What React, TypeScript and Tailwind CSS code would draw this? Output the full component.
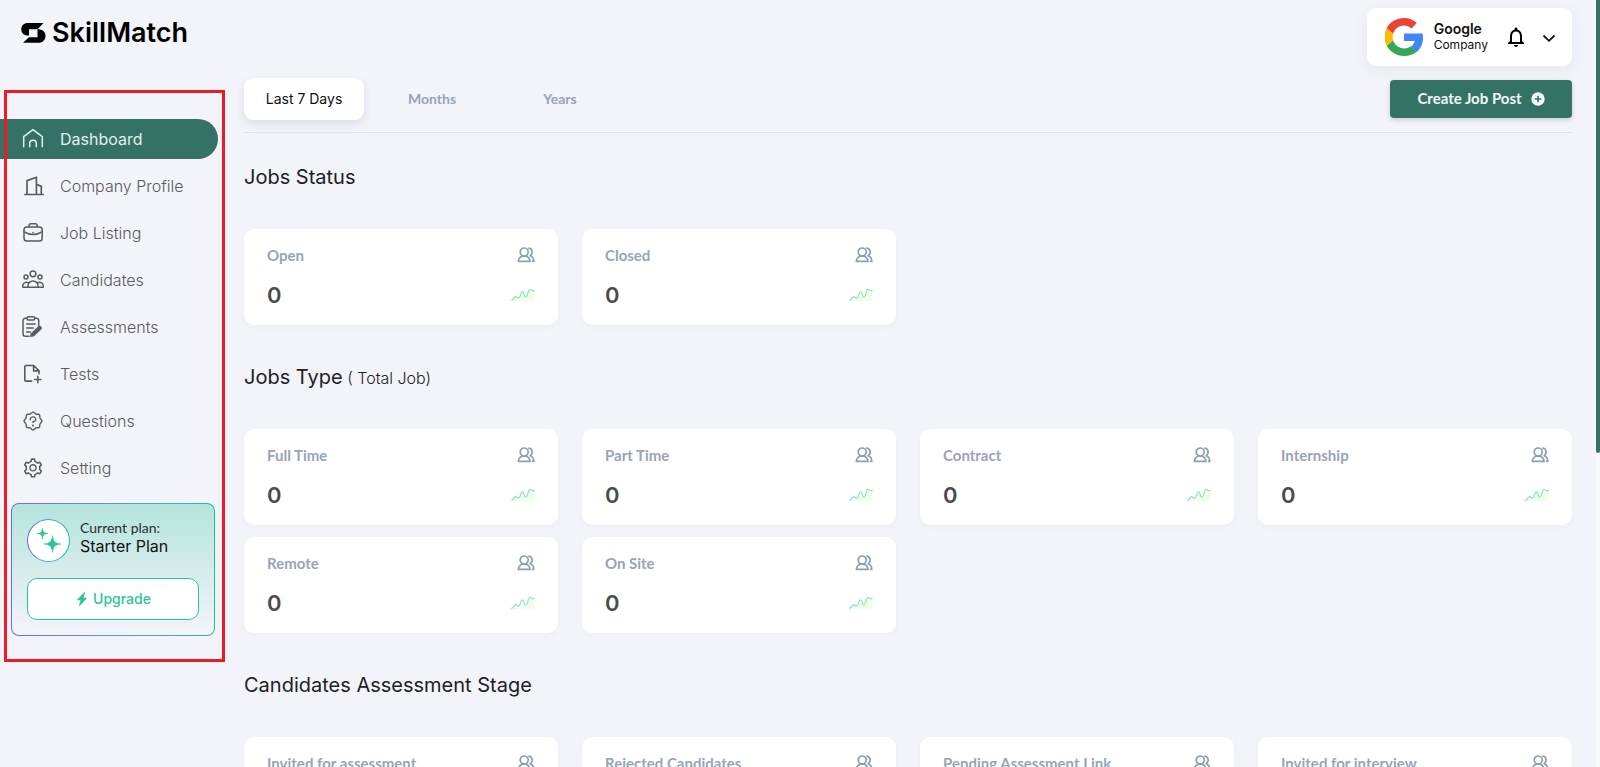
import type { ReactNode } from "react";
import { AiOutlineSetting } from "react-icons/ai";
import { BsFillLightningChargeFill } from "react-icons/bs";
import { MdNotificationsNone } from "react-icons/md";
import { PiSealQuestion } from "react-icons/pi";

type LineIconProps = { size?: number; strokeWidth?: number; children: ReactNode };

function LineIcon({ size = 22, strokeWidth = 1.4, children }: LineIconProps) {
  return (
    <svg
      width={size}
      height={size}
      viewBox="0 0 22 22"
      fill="none"
      stroke="currentColor"
      strokeWidth={strokeWidth}
      strokeLinecap="round"
      strokeLinejoin="round"
      aria-hidden="true"
      className="shrink-0"
    >
      {children}
    </svg>
  );
}

const HomeIcon = () => (
  <LineIcon strokeWidth={1.5}>
    <path d="M1.7 18.800V8.600L11 1.700l9.300 6.900v10.200" />
    <path d="M7.700 18.800v-3.200a3.300 3.300 0 0 1 6.600 0v3.200" />
  </LineIcon>
);

const CompanyIcon = () => (
  <LineIcon strokeWidth={1.7}>
    <path d="M3 19.500h18.200M5 19.500V5.600l9.400-3.400v17.300M14.400 9.200l4.900 2.200v8.100" />
  </LineIcon>
);

const BriefcaseIcon = () => (
  <LineIcon strokeWidth={1.5}>
    <rect x="2" y="5" width="18.200" height="14" rx="2.800" />
    <path d="M7 4.800V3.800c0-1.200.8-2 2-2h4.200c1.200 0 2 .8 2 2v1M2.200 9.900c5.200 3.500 12.600 3.500 17.800 0M11 10.600v.2" />
  </LineIcon>
);

const CandidatesIcon = () => (
  <LineIcon strokeWidth={1.5}>
    <circle cx="11" cy="4.800" r="2.900" />
    <circle cx="4" cy="8" r="2" />
    <circle cx="18" cy="8" r="2" />
    <path d="M6 18.300v-1.400a5 5 0 0 1 10 0v1.400zM6.300 13.700C3.300 12.600.8 14.300.8 16.500v1.800H6M15.700 13.700c3-1.100 5.500.6 5.500 2.800v1.800H16" />
  </LineIcon>
);

const AssessmentIcon = () => (
  <LineIcon strokeWidth={1.5}>
    <path d="M4.800 2.300H3.200A2.200 2.200 0 0 0 1 4.500v13.600a2.200 2.200 0 0 0 2.200 2.200H7M12.900 2.300h1.600a2.200 2.200 0 0 1 2.200 2.200v5" />
    <rect x="5" y=".8" width="7.800" height="3.100" rx="1.500" />
    <path d="M4.700 8h8.400M4.700 12h6.600M4.700 15.900h3.600" />
    <path
      d="m9 17.500 7.300-7c1.800-1.300 4.200.7 2.800 2.700L12 20l-3.300.6z"
      fill="currentColor"
      strokeWidth=".7"
    />
  </LineIcon>
);

const FileAddIcon = () => (
  <LineIcon strokeWidth={1.6}>
    <path d="M9.800 18.100H4a1.200 1.200 0 0 1-1.200-1.200V3.700A1.200 1.200 0 0 1 4 2.500h7.700l5.300 5.300v3M11.600 2.700v5.200h5.200M15.800 13.300v6.400M12.600 16.500H19" />
  </LineIcon>
);

const UsersIcon = () => (
  <svg
    width="18"
    height="18"
    viewBox="0 0 18 18"
    fill="none"
    stroke="#8a9fb0"
    strokeWidth="1.700"
    strokeLinejoin="round"
    strokeLinecap="round"
    aria-hidden="true"
  >
    <circle cx="7.200" cy="6" r="4" />
    <path d="M1.400 15.400c0-3 1.800-4.300 3.700-5.200h4.200c1.900.9 3.700 2.200 3.700 5.200zM12 2.200c3.600.6 4.200 5.400 1.200 7.500 2 .8 3.600 2.300 3.600 5.700h-1.200" />
  </svg>
);

const TrendIcon = () => (
  <svg width="24" height="14" viewBox="0 0 24 14" fill="none" aria-hidden="true">
    <path
      d="M.7 12.500 3.800 9c1-.9 1.700-.2 2.400.5.9.8 1.900.4 2.500-.8l1.700-4c.6-1.400 1.800-1.100 2.300.2l1 3.300c.5 1.300 1.700 1.200 2.200-.1l2-5.700c.5-1.300 1.500-1.500 2.200-.6.8.9 1.800 1.200 3.200.6V13H.7z"
      fill="#effee6"
    />
    <path
      d="M.7 12.500 3.800 9c1-.9 1.700-.2 2.400.5.9.8 1.900.4 2.500-.8l1.700-4c.6-1.400 1.800-1.100 2.300.2l1 3.300c.5 1.300 1.700 1.200 2.200-.1l2-5.700c.5-1.300 1.500-1.500 2.200-.6.8.9 1.800 1.200 3.200.6"
      stroke="#93e2c6"
      strokeWidth="1.200"
      strokeLinecap="round"
    />
  </svg>
);

const GoogleLogo = () => (
  <svg width="38" height="38" viewBox="3 3 42 42" role="img" aria-label="Google logo" className="shrink-0">
    <path fill="#4285F4" d="M44.500 20H24v8.500h11.800c-.6 2.800-2.200 5-4.600 6.500l7.100 5.500C42.500 36.700 45 31.200 45 24.500c0-1.600-.2-3.100-.5-4.500z" />
    <path fill="#34A853" d="M24 45c5.700 0 10.500-1.800 14.300-5l-7.100-5.500c-2 1.300-4.400 2.100-7.200 2.100-5.500 0-10.200-3.700-11.900-8.700l-7.300 5.600C8.300 40.400 15.600 45 24 45z" />
    <path fill="#FBBC05" d="M12.100 27.900c-.9-2.600-.9-5.300 0-7.900l-7.300-5.600a21 21 0 0 0 0 19.100z" />
    <path fill="#EA4335" d="M24 11.400c3.100 0 5.900 1.100 8.100 3.200l6.100-6.100C34.400 5 29.500 3 24 3 15.600 3 8.300 7.600 4.800 14.400l7.300 5.600c1.700-5 6.400-8.600 11.900-8.600z" />
  </svg>
);

const navItems = [
  { label: "Dashboard", icon: <HomeIcon />, active: true },
  { label: "Company Profile", icon: <CompanyIcon /> },
  { label: "Job Listing", icon: <BriefcaseIcon /> },
  { label: "Candidates", icon: <CandidatesIcon /> },
  { label: "Assessments", icon: <AssessmentIcon /> },
  { label: "Tests", icon: <FileAddIcon /> },
  { label: "Questions", icon: <PiSealQuestion size={22} /> },
  { label: "Setting", icon: <AiOutlineSetting size={22} /> },
];

function PlanCard() {
  return (
    <section className="mt-[15px] mr-[29px] ml-[11px] rounded-lg bg-linear-to-r from-[#7068ea] to-[#16c1a3] p-px">
      <div className="rounded-[7px] bg-linear-to-b from-[#b3e4dc] to-[#f3f4fa] p-[15px]">
        <div className="flex items-start gap-[10px]">
          <div className="size-[43px] shrink-0 rounded-full bg-linear-to-r from-[#7068ea] to-[#16c1a3] p-px">
            <div className="flex size-full items-center justify-center rounded-full bg-white">
              <svg width="41" height="41" viewBox="0 0 41 41" fill="#2ec49b" stroke="#2ec49b" strokeWidth=".6" strokeLinejoin="round" aria-hidden="true">
                <path d="M14.500 8c.5 4.200 1.300 5 5.500 5.500-4.200.5-5 1.300-5.500 5.500-.5-4.200-1.300-5-5.500-5.500 4.200-.5 5-1.300 5.500-5.500z" />
                <path d="M24.500 15.500c.9 6.300 2.200 7.600 8.500 8.500-6.300.9-7.600 2.200-8.500 8.500-.9-6.300-2.200-7.600-8.500-8.500 6.300-.9 7.600-2.200 8.500-8.500z" />
              </svg>
            </div>
          </div>
          <div>
            <p className="font-['Lato',sans-serif] text-sm leading-[18px] text-[#23302e]">Current plan:</p>
            <p className="text-base leading-[18px] text-[#111]">Starter Plan</p>
          </div>
        </div>
        <button
          type="button"
          className="mt-4 flex h-[42px] w-full items-center justify-center gap-1 rounded-[10px] border border-[#2ec49b] bg-white text-sm font-medium text-[#2ec49b]"
        >
          <BsFillLightningChargeFill size={14} />
          Upgrade
        </button>
      </div>
    </section>
  );
}

function StatCard({ label }: { label: string }) {
  return (
    <article className="flex h-24 flex-col justify-between rounded-[10px] bg-white px-[23px] pt-[15px] pb-[18px] shadow-[0_2px_6px_rgba(40,50,90,0.03)]">
      <div className="flex items-center justify-between">
        <h3 className="font-['Lato',sans-serif] text-[15px] font-bold text-[#98a3bb]">{label}</h3>
        <UsersIcon />
      </div>
      <div className="flex items-center justify-between">
        <p className="text-[22px] leading-6 font-semibold text-[#4b4b4b]">0</p>
        <TrendIcon />
      </div>
    </article>
  );
}

function StatSection({ title, note, labels }: { title: string; note?: string; labels: string[] }) {
  return (
    <section>
      <h2 className="mb-[38px] text-xl leading-7 text-[#202124]">
        {title}
        {note && <span className="text-base font-light"> {note}</span>}
      </h2>
      <div className="grid grid-cols-4 gap-x-6 gap-y-3">
        {labels.map((label) => (
          <StatCard key={label} label={label} />
        ))}
      </div>
    </section>
  );
}

export default function App() {
  return (
    <div className="relative h-screen overflow-hidden bg-[#f3f4fa] pr-7 font-['Inter',sans-serif]">
      <header className="flex items-start justify-between pt-2 pl-[21px]">
        <a href="#" className="flex items-center gap-[6px] pt-[7px] text-black">
          <svg width="25" height="20" viewBox="0 0 25 20" aria-hidden="true">
            <path
              fillRule="evenodd"
              d="M22.500 0H7C3 0 .3 2.500.3 6.200c0 3.900 2.700 6.400 7.700 6.400V6.300h8.700c4.800 0 7.800 2.500 7.800 6.500 0 4.300-2.700 7-7.300 7H2l6-5.500h8.500V6.300z"
            />
          </svg>
          <span className="text-[27px] leading-9 font-semibold">SkillMatch</span>
        </a>
        <div className="flex h-[58px] items-center rounded-[9px] bg-white pr-[14px] pl-[18px] shadow-[0_4px_16px_rgba(60,70,120,0.07)]">
          <GoogleLogo />
          <div className="ml-[11px] text-[#111]">
            <p className="text-sm leading-4 font-semibold">Google</p>
            <p className="text-xs leading-4">Company</p>
          </div>
          <button type="button" aria-label="Notifications" className="ml-4">
            <MdNotificationsNone size={24} />
          </button>
          <button type="button" aria-label="Open account menu" className="ml-3">
            <svg width="18" height="18" viewBox="0 0 18 18" fill="none" stroke="#111" strokeWidth="1.800">
              <path d="m3.500 7.500 5.500 5.300 5.500-5.300" />
            </svg>
          </button>
        </div>
      </header>

      <div className="flex">
        <aside className="w-[244px] shrink-0 pt-[53px]">
          <nav className="flex flex-col gap-[7px] pr-[26px]">
            {navItems.map(({ label, icon, active }) => (
              <a
                key={label}
                href="#"
                aria-current={active ? "page" : undefined}
                className={
                  active
                    ? "flex h-10 items-center gap-4 rounded-r-full bg-[#357266] pl-[22px] text-[#e4efec]"
                    : "flex h-10 items-center gap-4 pl-[22px] font-light text-[#5a5a62]"
                }
              >
                <span className="flex w-[22px] justify-center">{icon}</span>
                {label}
              </a>
            ))}
          </nav>
          <PlanCard />
        </aside>

        <main className="min-w-0 flex-1 pt-3">
          <div className="flex items-center justify-between border-b border-[#e1e3e8] pb-3">
            <div className="flex gap-2 text-sm">
              <button
                type="button"
                className="h-[42px] w-[120px] rounded-[9px] bg-white text-[#111] shadow-[0_4px_8px_rgba(50,60,90,0.12)]"
              >
                Last 7 Days
              </button>
              <button type="button" className="w-[120px] font-['Lato',sans-serif] font-bold text-[#98a3bb]">
                Months
              </button>
              <button type="button" className="w-[120px] font-['Lato',sans-serif] font-bold text-[#98a3bb]">
                Years
              </button>
            </div>
            <button
              type="button"
              className="flex h-[38px] w-[182px] items-center justify-center gap-[9px] rounded-[4px] bg-[#357266] pb-px font-['Lato',sans-serif] text-[15px] font-bold text-[#f1f8f5] shadow-[0_2px_5px_rgba(40,50,60,0.2)]"
            >
              Create Job Post
              <svg width="14" height="14" viewBox="0 0 14 14" aria-hidden="true">
                <circle cx="7" cy="7" r="6.700" fill="#f5fbf9" />
                <path d="M7 3.700v6.600M3.700 7h6.600" stroke="#357266" strokeWidth="1.600" />
              </svg>
            </button>
          </div>

          <div className="flex flex-col gap-[38px] pt-[30px]">
            <StatSection title="Jobs Status" labels={["Open", "Closed"]} />
            <StatSection
              title="Jobs Type"
              note="( Total Job)"
              labels={["Full Time", "Part Time", "Contract", "Internship", "Remote", "On Site"]}
            />
            <StatSection
              title="Candidates Assessment Stage"
              labels={[
                "Invited for assessment",
                "Rejected Candidates",
                "Pending Assessment Link",
                "Invited for interview",
              ]}
            />
          </div>
        </main>
      </div>

      <div className="pointer-events-none absolute top-[90px] left-1 h-[572px] w-[221px] border-3 border-[#ed1c24]" />
      <div className="absolute inset-y-0 right-0 w-1 bg-[#fafafa]">
        <div className="h-[59%] rounded-b-xs bg-[#357266]" />
      </div>
    </div>
  );
}
